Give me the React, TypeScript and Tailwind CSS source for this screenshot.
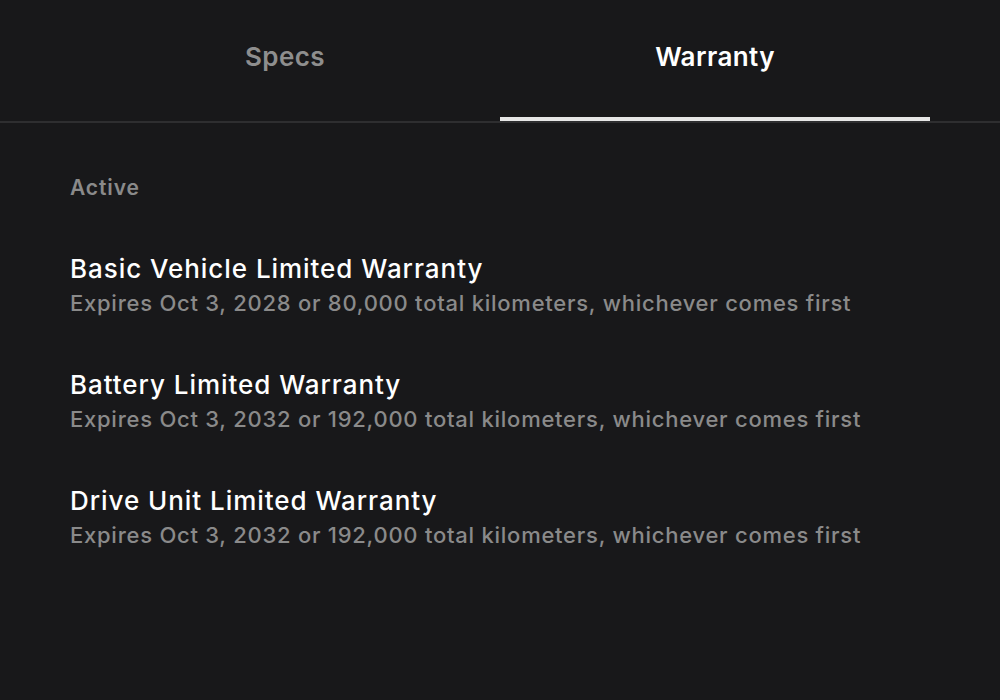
import { useState } from "react";

const warranties = [
  {
    title: "Basic Vehicle Limited Warranty",
    detail: "Expires Oct 3, 2028 or 80,000 total kilometers, whichever comes first",
  },
  {
    title: "Battery Limited Warranty",
    detail: "Expires Oct 3, 2032 or 192,000 total kilometers, whichever comes first",
  },
  {
    title: "Drive Unit Limited Warranty",
    detail: "Expires Oct 3, 2032 or 192,000 total kilometers, whichever comes first",
  },
];

export default function App() {
  const [tab, setTab] = useState("Warranty");

  return (
    <div
      className="w-[1000px] h-[700px] bg-[#18181a] overflow-hidden"
      style={{ fontFamily: "Inter, 'Noto Sans', sans-serif" }}
    >
      {/* Tabs */}
      <div className="border-b-2 border-[#2e2e30]">
        <div className="flex px-[70px]">
          {["Specs", "Warranty"].map((t) => {
            const active = tab === t;
            return (
              <button
                key={t}
                onClick={() => setTab(t)}
                className={`flex-1 h-[121px] flex items-center justify-center pb-[4px] text-[26px] font-semibold tracking-[0.4px] border-b-4 ${
                  active ? "text-white border-[#e6e6e6]" : "text-[#8e8e8e] border-transparent"
                }`}
              >
                {t}
              </button>
            );
          })}
        </div>
      </div>

      {/* Content */}
      <div className="px-[70px] pt-[52px]">
        <p className="text-[21px] font-semibold text-[#8a8a8a] leading-[26px] tracking-[0.9px]">Active</p>
        <div className="mt-[52px] flex flex-col gap-[48px]">
          {warranties.map((w) => (
            <div key={w.title}>
              <p className="text-[26px] font-medium text-white leading-[32px] tracking-[0.95px]">
                {w.title}
              </p>
              <p className="text-[22px] font-medium text-[#8a8a8a] leading-[36px] tracking-[0.75px]">
                {w.detail}
              </p>
            </div>
          ))}
        </div>
      </div>
    </div>
  );
}
